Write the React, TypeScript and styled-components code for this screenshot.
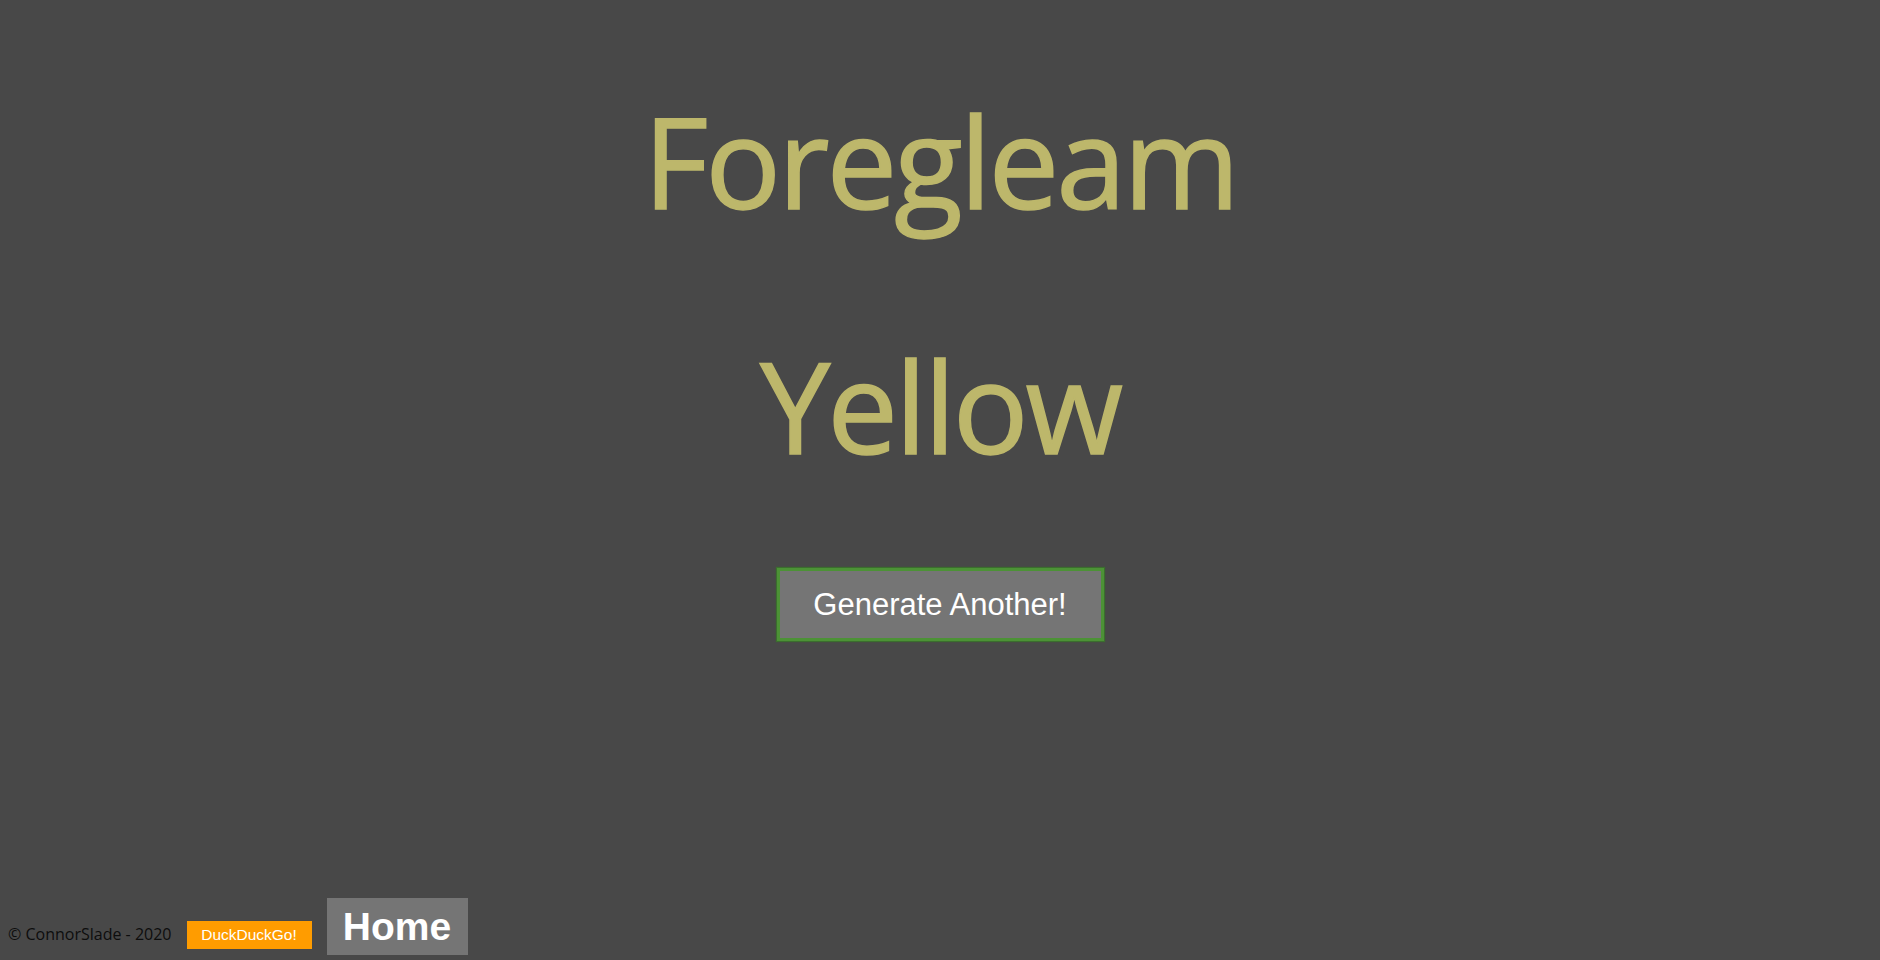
import React from "react";
import styled, { createGlobalStyle } from "styled-components";

const Global = createGlobalStyle`
  html, body {
    margin: 0;
    padding: 0;
    background: #484848;
  }
  body {
    font-family: "Open Sans", "Liberation Sans", sans-serif;
  }
`;

const Page = styled.div`
  min-height: 100vh;
  display: flex;
  flex-direction: column;
  box-sizing: border-box;
`;

const Main = styled.main`
  display: flex;
  flex-direction: column;
  align-items: center;
  padding-top: 74px;
`;

const Title = styled.h1<{ $gapAfter: number }>`
  margin: 0 0 ${(p) => p.$gapAfter}px 0;
  font-family: "Open Sans", sans-serif;
  font-weight: 400;
  font-size: 126px;
  line-height: 172px;
  letter-spacing: -3px;
  color: #bdb76b;
  -webkit-text-stroke: 1.5px #bdb76b;
  text-align: center;
`;

const GenerateButton = styled.button`
  font-family: "Liberation Sans", Arial, sans-serif;
  font-size: 31px;
  color: #ffffff;
  background: #757575;
  border: 3px solid #4c9236;
  box-shadow: 0 0 1px 1px #3b6e2e;
  padding: 0;
  line-height: 35px;
  cursor: pointer;
  width: 327px;
  height: 73px;
  box-sizing: border-box;
`;

const Footer = styled.footer`
  margin-top: auto;
  display: flex;
  align-items: baseline;
  gap: 15px;
  padding: 0 0 5px 8px;
`;

const Copy = styled.span`
  font-family: "Open Sans", sans-serif;
  font-size: 16px;
  color: #0d0d0d;
`;

const DuckButton = styled.a`
  display: inline-block;
  font-family: "Liberation Sans", Arial, sans-serif;
  font-size: 15.5px;
  line-height: 28px;
  height: 28px;
  width: 125px;
  text-align: center;
  color: #ffffff;
  background: #ff9c00;
  text-decoration: none;
`;

const HomeButton = styled.a`
  display: inline-block;
  font-family: "Liberation Sans", Arial, sans-serif;
  font-weight: 700;
  font-size: 39px;
  line-height: 57px;
  height: 57px;
  width: 141px;
  text-align: center;
  color: #ffffff;
  background: #757575;
  text-decoration: none;
`;

export default function App() {
  return (
    <Page>
      <Global />
      <Main>
        <Title $gapAfter={73}>Foregleam</Title>
        <Title $gapAfter={77}>Yellow</Title>
        <GenerateButton>Generate Another!</GenerateButton>
      </Main>
      <Footer>
        <Copy>© ConnorSlade - 2020</Copy>
        <DuckButton href="#">DuckDuckGo!</DuckButton>
        <HomeButton href="#">Home</HomeButton>
      </Footer>
    </Page>
  );
}
